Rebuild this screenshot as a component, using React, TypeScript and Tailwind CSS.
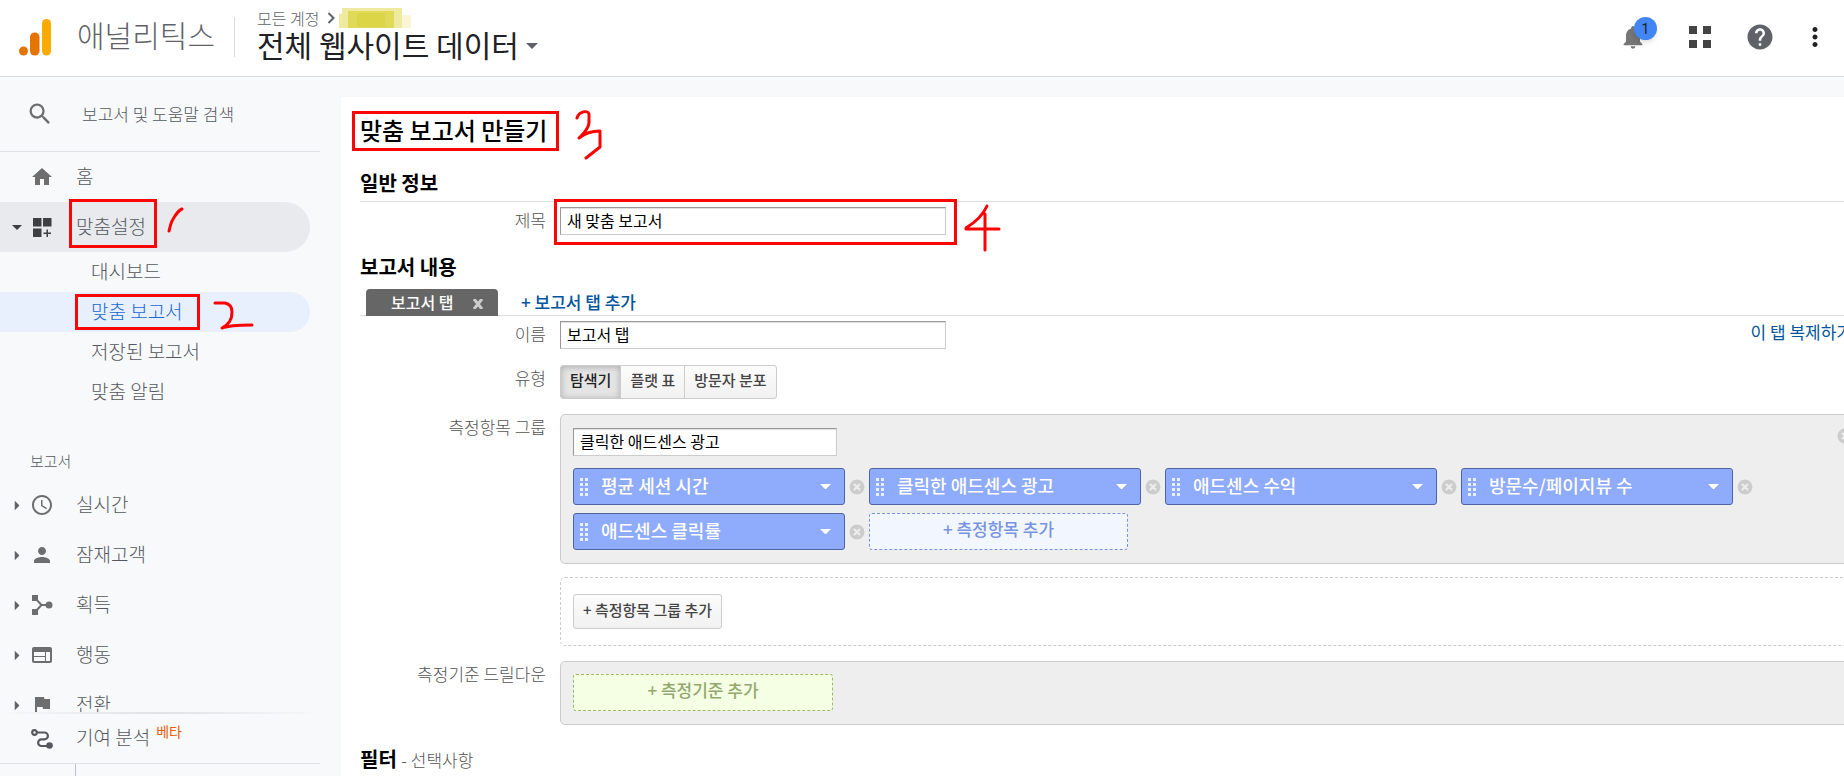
import type { ReactNode } from "react";
import clsx from "clsx";
import {
  MdAccessTime,
  MdFlag,
  MdHelp,
  MdHome,
  MdMoreVert,
  MdNotifications,
  MdPerson,
  MdSearch,
  MdWeb,
} from "react-icons/md";

const metrics = ["평균 세션 시간", "클릭한 애드센스 광고", "애드센스 수익", "방문수/페이지뷰 수", "애드센스 클릭률"];

const customLinks = ["대시보드", "맞춤 보고서", "저장된 보고서", "맞춤 알림"];

const AcquisitionIcon = () => (
  <svg viewBox="0 0 24 24" className="h-6 w-6" fill="currentColor">
    <path d="M2 2h6v6H2zM2 16h6v6H2z" />
    <circle cx="19" cy="12" r="3.5" />
    <path d="M5 5l6.5 7L5 19M11 12h8" fill="none" stroke="currentColor" strokeWidth="2" />
  </svg>
);

const CustomizeIcon = () => (
  <svg viewBox="0 0 24 24" className="h-6 w-6" fill="currentColor">
    <path d="M3 3h8.500v8.500H3zM13 3h8.500v8.500H13zM3 13.500h8.500V22H3zM16.500 14.500H18v3h3V19h-3v3h-1.500v-3h-3v-1.500h3z" />
  </svg>
);

const AttributionIcon = () => (
  <svg viewBox="0 0 24 24" className="h-6 w-6" fill="none" stroke="currentColor" strokeWidth="2.200">
    <circle cx="4.500" cy="5.500" r="2.300" />
    <path d="M7 5.500h7.500a3.300 3.300 0 010 6.800h-3a3.300 3.300 0 000 6.700H19" />
    <circle cx="19.500" cy="18.500" r="3.300" fill="currentColor" stroke="none" />
  </svg>
);

const Caret = ({ className }: { className?: string }) => (
  <svg viewBox="0 0 10 5" className={className} fill="currentColor">
    <path d="M0 0h10L5 5z" />
  </svg>
);

const RemoveButton = ({ label }: { label: string }) => (
  <button aria-label={label} className="shrink-0 text-[#ccc]">
    <svg viewBox="0 0 16 16" className="h-4 w-4">
      <circle cx="8" cy="8" r="7.500" fill="currentColor" />
      <path d="M5 5l6 6M11 5l-6 6" stroke="#eee" strokeWidth="2" />
    </svg>
  </button>
);

// Red marker frame around whatever it is placed in
const Mark = ({ className }: { className: string }) => (
  <span className={clsx("pointer-events-none absolute z-10 border-[3px] border-[#f90606]", className)} />
);

const Scribble = ({ d, box, className }: { d: string; box: string; className: string }) => (
  <svg
    viewBox={box}
    className={clsx("pointer-events-none absolute z-10", className)}
    fill="none"
    stroke="#fe0000"
    strokeWidth="3"
    strokeLinecap="round"
    strokeLinejoin="round"
  >
    <path d={d} />
  </svg>
);

const NavRow = ({ icon, label, open, arrow = true }: { icon: ReactNode; label: string; open?: boolean; arrow?: boolean }) => (
  <a
    href="#"
    className={clsx(
      "relative mr-[10px] flex h-[50px] items-center rounded-r-full pl-3 text-[19px] font-light",
      open && "bg-[#e8eaed]"
    )}
  >
    <span className="flex w-[18px] shrink-0 justify-start text-[#5f6368]">
      {arrow && <Caret className={clsx("w-[10px]", open ? "text-[#3c4043]" : "-rotate-90")} />}
    </span>
    <span className={clsx("mr-[22px]", open ? "text-[#3c4043]" : "text-[#6e6e6e]")}>{icon}</span>
    <span className="pb-[2px]">{label}</span>
    {open && (
      <>
        <Mark className="-top-[3px] bottom-1 left-[69px] w-[88px]" />
        <Scribble box="0 0 18 28" d="M15 3C10 5 8 10 5 15C3 19 3 22 2 25" className="left-[167px] top-1 h-7 w-[18px]" />
      </>
    )}
  </a>
);

const Sidebar = () => (
  <aside className="flex w-[320px] shrink-0 flex-col text-[#55585c]">
    <label className="flex h-[75px] shrink-0 items-center border-b border-[#dfe1e5] pl-[26px]">
      <MdSearch className="h-7 w-7 text-[#6e6e6e]" />
      <input
        aria-label="검색"
        placeholder="보고서 및 도움말 검색"
        className="ml-7 w-48 bg-transparent text-[17px] font-light outline-none placeholder:text-[#55585c]"
      />
    </label>
    <nav className="min-h-0 flex-1 overflow-hidden">
      <NavRow icon={<MdHome className="h-6 w-6" />} label="홈" arrow={false} />
      <NavRow icon={<CustomizeIcon />} label="맞춤설정" open />
      {customLinks.map((label) => {
        const active = label === "맞춤 보고서";
        return (
          <a
            key={label}
            href="#"
            className={clsx(
              "relative mr-[10px] flex h-10 items-center rounded-r-full pb-[2px] pl-[91px] text-[19px] font-light",
              active && "bg-[#e8f0fe] text-[#1967d2]"
            )}
          >
            {label}
            {active && (
              <>
                <Mark className="inset-y-[2px] left-[75px] w-[125px]" />
                <Scribble
                  box="0 0 42 30"
                  d="M3 3H13C18 4 20 7 20 12C20 20 17 24 10 28C15 26 25 25 40 25"
                  className="left-[212px] top-2 h-[30px] w-[42px]"
                />
              </>
            )}
          </a>
        );
      })}
      <h2 className="flex h-[68px] items-center pl-[30px] pt-[30px] text-[15px] font-light">보고서</h2>
      <NavRow icon={<MdAccessTime className="h-6 w-6" />} label="실시간" />
      <NavRow icon={<MdPerson className="h-6 w-6" />} label="잠재고객" />
      <NavRow icon={<AcquisitionIcon />} label="획득" />
      <NavRow icon={<MdWeb className="h-6 w-6" />} label="행동" />
      <NavRow icon={<MdFlag className="h-6 w-6" />} label="전환" />
    </nav>
    <div className="h-[2px] shrink-0 bg-linear-to-r from-transparent via-[#dfe1e5] to-transparent" />
    <a href="#" className="flex h-[50px] shrink-0 items-center border-b border-[#dfe1e5] pl-[30px] text-[19px] font-light">
      <AttributionIcon />
      <span className="ml-[22px] pb-[2px]">기여 분석</span>
      <span className="ml-[6px] pb-4 text-sm font-normal text-[#e8610a]">베타</span>
    </a>
    <div className="ml-[75px] h-3 shrink-0 border-l border-[#bdc1c6]" />
  </aside>
);

const Header = () => (
  <header className="flex h-[77px] shrink-0 items-center border-b border-[#dadce0] bg-white pb-[2px] pl-[19px] pr-[14px]">
    <svg viewBox="0 0 32 37" className="h-[37px] w-8">
      <circle cx="4.500" cy="32" r="4.500" fill="#e37400" />
      <rect x="11" y="13.500" width="9.500" height="23" rx="4.500" fill="#e37400" />
      <rect x="23" y="0" width="9" height="36.500" rx="4.500" fill="#f9ab00" />
    </svg>
    <span className="ml-[26px] pb-[6px] text-[30px] font-light leading-10 text-[#5f6368]">애널리틱스</span>
    <div className="ml-[19px] h-10 border-l border-[#dadce0]" />
    <div className="ml-[22px] pb-2">
      <div className="flex items-center text-base font-light leading-5 text-[#5f6368]">
        모든 계정
        <svg viewBox="0 0 8 12" className="ml-2 h-3 w-2" fill="none" stroke="currentColor" strokeWidth="2">
          <path d="M1.500 1l5 5-5 5" />
        </svg>
        <svg viewBox="0 0 72 22" className="ml-1 h-[22px] w-[72px]">
          <path d="M0 8h72v13H0z" fill="#f8f6d4" />
          <path d="M3 1h60v20H0V7h3z" fill="#eeeaa0" />
          <path d="M9 4h46v17H9z" fill="#e0da58" />
          <path d="M18 6h28v14H18z" fill="#dcd548" />
        </svg>
      </div>
      <button className="flex items-center text-[30px] leading-[30px] text-[#202124]">
        전체 웹사이트 데이터
        <Caret className="ml-[7px] mt-1 w-3 text-[#5f6368]" />
      </button>
    </div>
    <div className="ml-auto flex items-center">
      <button aria-label="알림" className="relative text-[#757575]">
        <MdNotifications className="h-7 w-7" />
        <span className="absolute -top-[6px] left-[15px] flex h-[23px] w-[23px] items-center justify-center rounded-full bg-[#4285f4] font-[Roboto] text-sm text-[#202124] shadow-md">
          1
        </span>
      </button>
      <button aria-label="앱" className="ml-[42px] grid grid-cols-2 gap-[6px] text-[#444]">
        <i className="h-2 w-2 bg-current" />
        <i className="h-2 w-2 bg-current" />
        <i className="h-2 w-2 bg-current" />
        <i className="h-2 w-2 bg-current" />
      </button>
      <button aria-label="도움말" className="ml-[34px]">
        <MdHelp className="h-[30px] w-[30px] text-[#5f6368]" />
      </button>
      <button aria-label="더보기" className="ml-[25px]">
        <MdMoreVert className="h-[30px] w-[30px] text-[#202124]" />
      </button>
    </div>
  </header>
);

const Field = ({ label, htmlFor, className, children }: { label?: string; htmlFor?: string; className: string; children: ReactNode }) => (
  <div className={clsx("grid grid-cols-[186px_1fr] gap-[14px]", className)}>
    <label htmlFor={htmlFor} className="text-right text-[17px] font-light leading-[26px] text-[#555]">
      {label}
    </label>
    {children}
  </div>
);

const TextInput = ({ id, value, className }: { id: string; value: string; className: string }) => (
  <input
    id={id}
    defaultValue={value}
    className={clsx(
      "block h-7 border border-[#ccc] border-l-[#999] border-t-[#999] bg-white px-[6px] pb-[2px] text-base text-black shadow-[inset_0_1px_1px_#ddd] outline-none",
      className
    )}
  />
);

const MetricChip = ({ label }: { label: string }) => (
  <div className="flex items-center gap-1">
    <button className="flex h-[37px] w-[272px] items-center rounded-[3px] border border-[#5065a0] bg-[#8fabfc] pl-[6px] pr-[13px] text-lg font-medium text-white">
      <svg viewBox="0 0 8 18" className="h-[18px] w-2 opacity-80" fill="currentColor">
        <path d="M0 0h3v3H0zM5 0h3v3H5zM0 5h3v3H0zM5 5h3v3H5zM0 10h3v3H0zM5 10h3v3H5zM0 15h3v3H0zM5 15h3v3H5z" />
      </svg>
      <span className="ml-[13px] pb-1">{label}</span>
      <Caret className="ml-auto w-[11px]" />
    </button>
    <RemoveButton label={`${label} 삭제`} />
  </div>
);

const ReportForm = () => (
  <main className="-mr-[22px] ml-[21px] mt-5 min-w-0 flex-1 bg-white pl-[19px] text-black">
    <div className="relative pt-4">
      <h1 className="relative inline-block text-2xl font-medium leading-[34px]">
        맞춤 보고서 만들기
        <Mark className="-bottom-1 -left-2 -right-3 -top-[2px]" />
      </h1>
      <Scribble
        box="0 0 30 50"
        d="M2 8C4 1 13 0 14 4V13C13 20 8 24 4 28C10 23 18 21 25 21V37L11 48"
        className="left-[215px] top-[13px] h-[50px] w-[30px]"
      />
    </div>

    <h2 className="mt-[22px] border-b border-[#ddd] pb-1 text-xl font-bold leading-7">일반 정보</h2>
    <Field label="제목" htmlFor="title" className="mt-[5px]">
      <div className="relative">
        <TextInput id="title" value="새 맞춤 보고서" className="w-[386px]" />
        <Mark className="-left-[6px] -top-2 h-[46px] w-[403px]" />
        <Scribble
          box="0 0 38 50"
          d="M24 3C20 12 11 20 3 25V26H36M22 11V47"
          className="-top-1 left-[403px] h-[50px] w-[38px]"
        />
      </div>
    </Field>

    <h2 className="mt-[18px] text-xl font-bold leading-7">보고서 내용</h2>
    <div className="mt-2 flex h-[27px] items-end border-b border-[#ddd] pl-[6px] text-base">
      <div className="-mb-px flex h-[27px] w-[132px] items-center rounded-t bg-[#666] pb-[2px] pl-[25px] font-medium text-white">
        보고서 탭
        <button aria-label="탭 닫기" className="ml-5 text-[#ccc]">
          <svg viewBox="0 0 10 10" className="mt-1 h-[10px] w-[10px]" stroke="currentColor" strokeWidth="3">
            <path d="M1 0l8 10M9 0L1 10" />
          </svg>
        </button>
      </div>
      <button className="ml-[23px] text-[17px] font-medium leading-[26px] text-[#00569c]">+ 보고서 탭 추가</button>
    </div>

    <Field label="이름" htmlFor="tab-name" className="mt-[5px]">
      <div className="flex items-start justify-between">
        <TextInput id="tab-name" value="보고서 탭" className="w-[386px]" />
        <a href="#" className="mr-[14px] text-[17px] leading-[22px] text-[#00569c]">
          이 탭 복제하기
        </a>
      </div>
    </Field>

    <Field label="유형" className="mt-4">
      <div className="flex h-[34px] w-fit divide-x divide-[#ccc] overflow-hidden rounded-[3px] border border-[#ccc] bg-linear-to-b from-[#fcfcfc] to-[#f1f1f1] text-[15px] font-medium text-[#444]">
        <button className="bg-[#e4e4e4] px-[9px] pb-1 text-[#222] shadow-[inset_0_1px_6px_#aaa]">탐색기</button>
        <button className="px-[9px] pb-1">플랫 표</button>
        <button className="px-[9px] pb-1">방문자 분포</button>
      </div>
    </Field>

    <Field label="측정항목 그룹" htmlFor="group-name" className="mt-[15px]">
      <div className="rounded-[5px] border border-[#ccc] bg-[#eee] px-3 py-[13px]">
        <div className="flex items-start justify-between">
          <TextInput id="group-name" value="클릭한 애드센스 광고" className="w-[264px]" />
          <RemoveButton label="그룹 삭제" />
        </div>
        <div className="mt-3 flex flex-wrap gap-x-1 gap-y-2">
          {metrics.map((m) => (
            <MetricChip key={m} label={m} />
          ))}
          <button className="h-[37px] w-[259px] rounded-[3px] border border-dashed border-[#7893e2] bg-[#f2f7ff] pb-[6px] text-[17px] font-medium text-[#7893e2]">
            + 측정항목 추가
          </button>
        </div>
      </div>
    </Field>

    <Field className="mt-[13px]">
      <div className="rounded-[5px] border border-dashed border-[#ccc] px-3 py-4">
        <button className="h-[35px] rounded-[3px] border border-[#ccc] bg-linear-to-b from-[#fcfcfc] to-[#f1f1f1] px-[9px] pb-[2px] text-[15px] font-medium text-[#444]">
          + 측정항목 그룹 추가
        </button>
      </div>
    </Field>

    <Field label="측정기준 드릴다운" className="mt-[15px]">
      <div className="rounded-[5px] border border-[#ccc] bg-[#eee] px-3 pb-[13px] pt-3">
        <button className="block h-[37px] w-[260px] rounded-[3px] border border-dashed border-[#9dba68] bg-[#f5ffe3] pb-[6px] text-[17px] font-medium text-[#93a86e]">
          + 측정기준 추가
        </button>
      </div>
    </Field>

    <h2 className="mt-5 text-xl font-bold leading-7">
      필터 <span className="text-[17px] font-light text-[#555]">- 선택사항</span>
    </h2>
  </main>
);

export default function App() {
  return (
    <div className="flex h-screen flex-col overflow-hidden bg-[#f8f9fb] font-['Noto_Sans_CJK_KR',sans-serif]">
      <Header />
      <div className="flex min-h-0 flex-1 overflow-hidden">
        <Sidebar />
        <ReportForm />
      </div>
    </div>
  );
}
